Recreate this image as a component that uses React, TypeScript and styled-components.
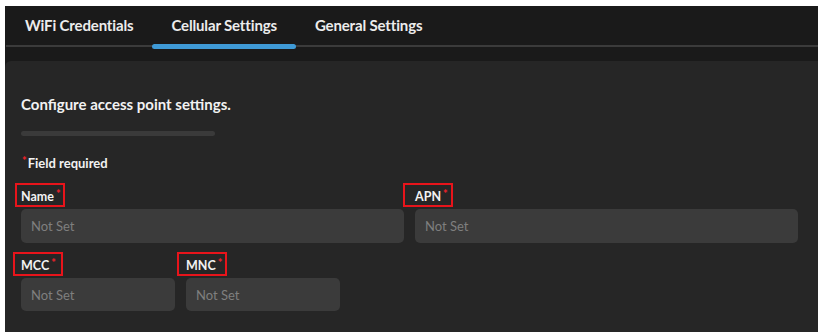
import React from "react";
import styled, { createGlobalStyle } from "styled-components";

const GlobalStyle = createGlobalStyle`
  html, body { margin: 0; padding: 0; background: #ffffff; }
  body { font-family: "Lato", "Noto Sans", sans-serif; -webkit-font-smoothing: antialiased; }
  * { box-sizing: border-box; }
`;

const Frame = styled.div`
  margin: 6px 0 0 5px;
  width: 813px;
  height: 326px;
  display: flex;
  flex-direction: column;
  background: #1a1a1a;
`;

const Header = styled.div`
  height: 55px;
  padding-left: 1px;
  background: #1a1a1a;
`;

const TabBar = styled.div`
  display: flex;
  height: 39px;
  border-bottom: 2px solid #3b3b3b;
  box-sizing: content-box;
`;

const Tab = styled.div<{ $active?: boolean }>`
  position: relative;
  padding: 0 19px;
  height: 39px;
  display: flex;
  align-items: center;
  padding-bottom: 2px;
  font-size: 15px;
  font-weight: 700;
  letter-spacing: -0.15px;
  color: #ececec;
  &::after {
    content: "";
    display: ${(p) => (p.$active ? "block" : "none")};
    position: absolute;
    left: 0;
    right: 0;
    bottom: -4px;
    height: 5px;
    border-radius: 3px;
    background: #3f9ad6;
  }
`;

const Content = styled.div`
  flex: 1;
  background: #262626;
  border-top-left-radius: 6px;
  padding: 33px 20px 0 16px;
  display: flex;
  flex-direction: column;
`;

const Description = styled.div`
  font-size: 15px;
  line-height: 20px;
  font-weight: 700;
  color: #f2f2f2;
`;

const ProgressTrack = styled.div`
  margin-top: 17px;
  width: 194px;
  height: 5px;
  border-radius: 3px;
  background: #3a3a3a;
`;

const RequiredNote = styled.div`
  margin-top: 17px;
  font-size: 13px;
  line-height: 16px;
  font-weight: 700;
  color: #f2f2f2;
`;

const Star = styled.span<{ $lead?: number }>`
  color: #e8222a;
  font-size: 11px;
  font-weight: 900;
  vertical-align: 3px;
  margin-right: 1px;
  margin-left: ${(p) => p.$lead ?? 2}px;
`;

const FieldRow = styled.div<{ $top: number }>`
  margin-top: ${(p) => p.$top}px;
  display: flex;
  gap: 11px;
`;

const Field = styled.div<{ $width: number }>`
  width: ${(p) => p.$width}px;
  display: flex;
  flex-direction: column;
  gap: 4px;
`;

const Label = styled.div`
  position: relative;
  align-self: flex-start;
  font-size: 12.5px;
  line-height: 16px;
  font-weight: 700;
  color: #f2f2f2;
`;

const Annotation = styled.span<{ $offset: number }>`
  position: absolute;
  top: -3px;
  bottom: -2px;
  left: ${(p) => -p.$offset}px;
  width: 50px;
  border: 2px solid #e8141b;
  pointer-events: none;
`;

const Input = styled.input<{ $height: number }>`
  height: ${(p) => p.$height}px;
  width: 100%;
  border: none;
  outline: none;
  border-radius: 5px;
  background: #3b3b3b;
  padding: 0 10px;
  font-family: "Lato", "Noto Sans", sans-serif;
  font-size: 13px;
  color: #f2f2f2;
  &::placeholder {
    color: #7f7f7f;
  }
`;

type FieldDef = { label: string; width: number; offset: number; height: number };

const row1: FieldDef[] = [
  { label: "Name", width: 383, offset: 6, height: 34 },
  { label: "APN", width: 383, offset: 12, height: 34 },
];
const row2: FieldDef[] = [
  { label: "MCC", width: 154, offset: 8, height: 33 },
  { label: "MNC", width: 154, offset: 9, height: 33 },
];

const renderField = (f: FieldDef) => (
  <Field key={f.label} $width={f.width}>
    <Label>
      {f.label}
      <Star>*</Star>
      <Annotation $offset={f.offset} />
    </Label>
    <Input placeholder="Not Set" $height={f.height} />
  </Field>
);

export default function App() {
  return (
    <>
      <GlobalStyle />
      <Frame>
        <Header>
          <TabBar>
            <Tab>WiFi Credentials</Tab>
            <Tab $active>Cellular Settings</Tab>
            <Tab>General Settings</Tab>
          </TabBar>
        </Header>
        <Content>
          <Description>Configure access point settings.</Description>
          <ProgressTrack />
          <RequiredNote>
            <Star $lead={1}>*</Star>Field required
          </RequiredNote>
          <FieldRow $top={15}>{row1.map(renderField)}</FieldRow>
          <FieldRow $top={12}>{row2.map(renderField)}</FieldRow>
        </Content>
      </Frame>
    </>
  );
}
